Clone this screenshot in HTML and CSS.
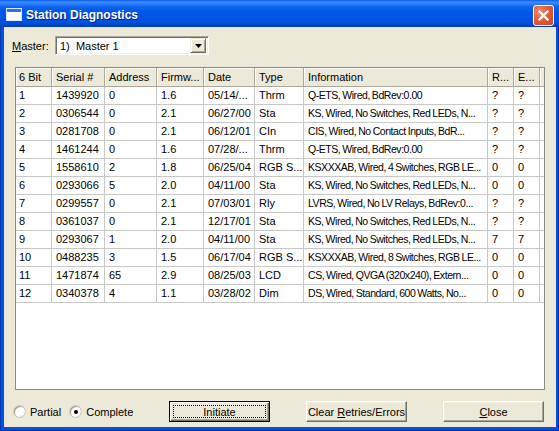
FILE: index.html
```html
<!DOCTYPE html>
<html>
<head>
<meta charset="utf-8">
<link rel="stylesheet" href="styles.css">
</head>
<body>
<div class="window">
  <div class="titlebar">
    <svg class="ticon" width="16" height="13" viewBox="0 0 16 13">
      <rect x="0.5" y="0.5" width="15" height="12" fill="#fff" stroke="#dfe8f8"/>
      <rect x="1" y="1" width="14" height="3" fill="#2a6ff0"/>
    </svg>
    <span class="title">Station Diagnostics</span>
    <div class="close">
      <svg width="11" height="11" viewBox="0 0 11 11"><path d="M1.5 1.5 L9.5 9.5 M9.5 1.5 L1.5 9.5" stroke="#fff" stroke-width="2.4" stroke-linecap="square"/></svg>
    </div>
  </div>
  <div class="client">
    <div class="master-row">
      <span class="master-label"><u>M</u>aster:</span>
      <div class="combo">
        <span class="combo-text">1)&nbsp; Master 1</span>
        <div class="combo-btn">
          <svg width="7" height="4" viewBox="0 0 7 4"><path d="M0 0 H7 L3.5 4 Z" fill="#000"/></svg>
        </div>
      </div>
    </div>
    <div class="list">
      <table class="grid">
        <colgroup>
          <col class="c1"><col class="c2"><col class="c3"><col class="c4"><col class="c5"><col class="c6"><col class="c7"><col class="c8"><col class="c9"><col class="cf">
        </colgroup>
        <thead>
          <tr><th class="first">6 Bit</th><th>Serial #</th><th>Address</th><th>Firmw...</th><th>Date</th><th>Type</th><th>Information</th><th>R...</th><th>E...</th><th class="fill"></th></tr>
        </thead>
        <tbody>
          <tr><td class="first">1</td><td>1439920</td><td>0</td><td>1.6</td><td>05/14/...</td><td>Thrm</td><td class="info">Q-ETS, Wired, BdRev:0.00</td><td>?</td><td>?</td><td class="fill"></td></tr>
          <tr><td class="first">2</td><td>0306544</td><td>0</td><td>2.1</td><td>06/27/00</td><td>Sta</td><td class="info">KS, Wired, No Switches, Red LEDs, N...</td><td>?</td><td>?</td><td class="fill"></td></tr>
          <tr><td class="first">3</td><td>0281708</td><td>0</td><td>2.1</td><td>06/12/01</td><td>CIn</td><td class="info">CIS, Wired, No Contact Inputs, BdR...</td><td>?</td><td>?</td><td class="fill"></td></tr>
          <tr><td class="first">4</td><td>1461244</td><td>0</td><td>1.6</td><td>07/28/...</td><td>Thrm</td><td class="info">Q-ETS, Wired, BdRev:0.00</td><td>?</td><td>?</td><td class="fill"></td></tr>
          <tr><td class="first">5</td><td>1558610</td><td>2</td><td>1.8</td><td>06/25/04</td><td>RGB S...</td><td class="info">KSXXXAB, Wired, 4 Switches, RGB LE...</td><td>0</td><td>0</td><td class="fill"></td></tr>
          <tr><td class="first">6</td><td>0293066</td><td>5</td><td>2.0</td><td>04/11/00</td><td>Sta</td><td class="info">KS, Wired, No Switches, Red LEDs, N...</td><td>0</td><td>0</td><td class="fill"></td></tr>
          <tr><td class="first">7</td><td>0299557</td><td>0</td><td>2.1</td><td>07/03/01</td><td>Rly</td><td class="info">LVRS, Wired, No LV Relays, BdRev:0...</td><td>?</td><td>?</td><td class="fill"></td></tr>
          <tr><td class="first">8</td><td>0361037</td><td>0</td><td>2.1</td><td>12/17/01</td><td>Sta</td><td class="info">KS, Wired, No Switches, Red LEDs, N...</td><td>?</td><td>?</td><td class="fill"></td></tr>
          <tr><td class="first">9</td><td>0293067</td><td>1</td><td>2.0</td><td>04/11/00</td><td>Sta</td><td class="info">KS, Wired, No Switches, Red LEDs, N...</td><td>7</td><td>7</td><td class="fill"></td></tr>
          <tr><td class="first">10</td><td>0488235</td><td>3</td><td>1.5</td><td>06/17/04</td><td>RGB S...</td><td class="info">KSXXXAB, Wired, 8 Switches, RGB LE...</td><td>0</td><td>0</td><td class="fill"></td></tr>
          <tr><td class="first">11</td><td>1471874</td><td>65</td><td>2.9</td><td>08/25/03</td><td>LCD</td><td class="info">CS, Wired, QVGA (320x240), Extern...</td><td>0</td><td>0</td><td class="fill"></td></tr>
          <tr><td class="first">12</td><td>0340378</td><td>4</td><td>1.1</td><td>03/28/02</td><td>Dim</td><td class="info">DS, Wired, Standard, 600 Watts, No...</td><td>0</td><td>0</td><td class="fill"></td></tr>
        </tbody>
      </table>
    </div>
    <div class="bottom">
      <div class="radios">
        <span class="radio"><span class="dot"></span><span>Partial</span></span>
        <span class="radio checked"><span class="dot"></span><span>Complete</span></span>
      </div>
      <div class="btn default"><span class="focus">Initiate</span></div>
      <div class="btn"><span>Clear <u>R</u>etries/Errors</span></div>
      <div class="btn"><span><u>C</u>lose</span></div>
    </div>
  </div>
</div>
</body>
</html>
```

FILE: styles.css
```css
* { box-sizing: border-box; }
body {
  margin: 0;
  font-family: "Liberation Sans", Arial, sans-serif;
  font-size: 11px;
  color: #000;
  background: #fff;
}
.window {
  width: 559px;
  height: 431px;
  display: flex;
  flex-direction: column;
  background: #0053e0;
  box-shadow: inset 1px 0 #0838b8, inset -1px 0 #002d9c, inset 0 -1px #002d9c;
}
.titlebar {
  height: 27px;
  flex: none;
  display: flex;
  align-items: center;
  padding: 0 5px 0 6px;
  background: linear-gradient(to bottom, #0a5ae8 0px, #3b8cff 2px, #2a7cf8 4px, #0a62f0 7px, #0058ea 11px, #0055e5 17px, #0052dc 22px, #0048cc 25px, #003cb8 27px);
}
.ticon { flex: none; margin-top: 2px; }
.title {
  margin-left: 4px;
  margin-top: 2px;
  color: #fff;
  font-weight: bold;
  font-size: 12px;
  text-shadow: 1px 1px #0a1e7a;
}
.close {
  margin-left: auto;
  margin-top: 3px;
  width: 21px;
  height: 21px;
  border: 1px solid #fff;
  border-radius: 3px;
  background: radial-gradient(circle at 30% 30%, #f08a6c 0%, #e35c38 45%, #cc4426 100%);
  display: flex;
  align-items: center;
  justify-content: center;
}
.close svg { display: block; }
.client {
  flex: 1;
  margin: 0 3px 4px 4px;
  background: #ece9d8;
  display: flex;
  flex-direction: column;
}
.master-row {
  display: flex;
  align-items: center;
  margin-top: 9px;
  height: 19px;
}
.master-label {
  width: 51px;
  padding-left: 8px;
  white-space: nowrap;
}
.combo {
  width: 154px;
  height: 19px;
  background: #fff;
  border: 1px solid;
  border-color: #aca899 #fff #fff #aca899;
  box-shadow: inset 1px 1px #716f64, inset -1px -1px #f1efe2;
  display: flex;
  align-items: center;
  padding: 2px 2px 2px 4px;
}
.combo-text { flex: 1; white-space: pre; }
.combo-btn {
  width: 16px;
  height: 15px;
  background: #ece9d8;
  border: 1px solid;
  border-color: #f1efe2 #716f64 #716f64 #f1efe2;
  box-shadow: inset 1px 1px #fff, inset -1px -1px #aca899;
  display: flex;
  align-items: center;
  justify-content: center;
}
.combo-btn svg { display: block; }
.list {
  margin: 12px 0 0 11px;
  width: 530px;
  height: 323px;
  background: #fff;
  border: 1px solid #8e8b7e;
  overflow: hidden;
}
.grid {
  width: 100%;
  table-layout: fixed;
  border-collapse: separate;
  border-spacing: 0;
}
.c1 { width: 36px; }
.c2 { width: 53px; }
.c3 { width: 52px; }
.c4 { width: 47px; }
.c5 { width: 51px; }
.c6 { width: 49px; }
.c7 { width: 184px; }
.c8 { width: 26px; }
.c9 { width: 26px; }
.grid th, .grid td {
  height: 18px;
  padding: 0 0 0 4px;
  text-align: left;
  font-weight: normal;
  white-space: nowrap;
  overflow: hidden;
  text-overflow: clip;
  line-height: 17px;
}
.grid th {
  background: #ece9d8;
  border-right: 1px solid #aca899;
  border-bottom: 1px solid #aca899;
  box-shadow: inset 1px 1px #fff;
  height: 19px;
}
.grid th.fill { border-right: none; }
.grid td {
  border-right: 1px solid #c8c8c8;
  border-bottom: 1px solid #c8c8c8;
}
.grid td.info {
  font-size: 10.5px;
  letter-spacing: -0.45px;
  word-spacing: -0.5px;
}
.grid td.fill { border-right: none; }
.grid .first { padding-left: 3px; }
.bottom {
  display: flex;
  align-items: center;
  margin-top: 11px;
  height: 21px;
}
.radios {
  width: 165px;
  display: flex;
  align-items: center;
  padding-left: 9px;
}
.radio {
  display: flex;
  align-items: center;
  gap: 4px;
  margin-right: 8px;
}
.dot {
  width: 13px;
  height: 13px;
  border-radius: 50%;
  background: radial-gradient(circle at 40% 40%, #fff 0%, #fff 50%, #e6e4da 100%);
  border: 1px solid #c8c4b4;
  box-shadow: inset 1px 1px #9c9a8c;
  display: flex;
  align-items: center;
  justify-content: center;
}
.checked .dot::after {
  content: "";
  width: 4px;
  height: 4px;
  border-radius: 50%;
  background: #000;
}
.btn {
  width: 101px;
  height: 21px;
  margin-left: 36px;
  background: #ece9d8;
  border: 1px solid;
  border-color: #fff #716f64 #716f64 #fff;
  box-shadow: inset -1px -1px #aca899, inset 1px 1px #f1efe2;
  display: flex;
  align-items: center;
  justify-content: center;
  white-space: pre;
}
.btn.default {
  margin-left: 0;
  border: 1px solid #000;
  box-shadow: inset 1px 1px #fff, inset -1px -1px #716f64, inset -2px -2px #aca899;
  padding: 3px;
}
.focus {
  flex: 1;
  align-self: stretch;
  display: flex;
  align-items: center;
  justify-content: center;
  border: 1px dotted #000;
}
```
